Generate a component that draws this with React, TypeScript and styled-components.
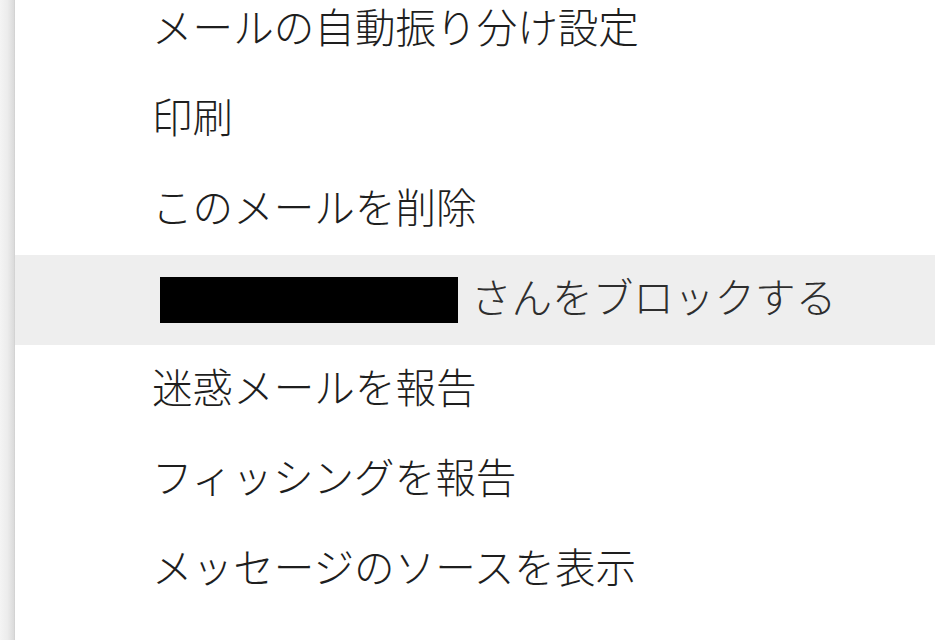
import styled, { createGlobalStyle } from "styled-components";

const GlobalStyle = createGlobalStyle`
  html, body {
    margin: 0;
    padding: 0;
    background: #ffffff;
    overflow: hidden;
  }
`;

const Page = styled.div`
  display: flex;
  width: 935px;
  height: 640px;
  overflow: hidden;
  background: #ffffff;
`;

const Edge = styled.div`
  flex: 0 0 15px;
  background: linear-gradient(
    to right,
    #f4f4f4 0%,
    #ececec 50%,
    #dcdcdc 90%,
    #cfcfcf 100%
  );
`;

const Menu = styled.ul`
  flex: 1;
  list-style: none;
  margin: -15px 0 0;
  padding: 0;
  font-family: "Noto Sans CJK JP", "Noto Sans", sans-serif;
  font-size: 40.6px;
  font-weight: 300;
  line-height: 1.15;
  color: #1e1e1e;
`;

const Item = styled.li<{ $active?: boolean }>`
  display: flex;
  align-items: center;
  box-sizing: border-box;
  height: 90px;
  padding: 0 0 8px 137px;
  background: ${(p) => (p.$active ? "#eeeeee" : "transparent")};
  color: ${(p) => (p.$active ? "#2e2e2e" : "#1e1e1e")};
  white-space: nowrap;
`;

const Redacted = styled.span`
  display: inline-block;
  flex: 0 0 auto;
  width: 298px;
  height: 46px;
  margin: 8px 13px 0 8px;
  background: #000000;
`;

const items = [
  "メールの自動振り分け設定",
  "印刷",
  "このメールを削除",
  null,
  "迷惑メールを報告",
  "フィッシングを報告",
  "メッセージのソースを表示",
];

export default function App() {
  return (
    <>
      <GlobalStyle />
      <Page>
        <Edge />
        <Menu>
          {items.map((label, i) =>
            label === null ? (
              <Item key={i} $active>
                <Redacted />
                さんをブロックする
              </Item>
            ) : (
              <Item key={i}>{label}</Item>
            )
          )}
        </Menu>
      </Page>
    </>
  );
}
